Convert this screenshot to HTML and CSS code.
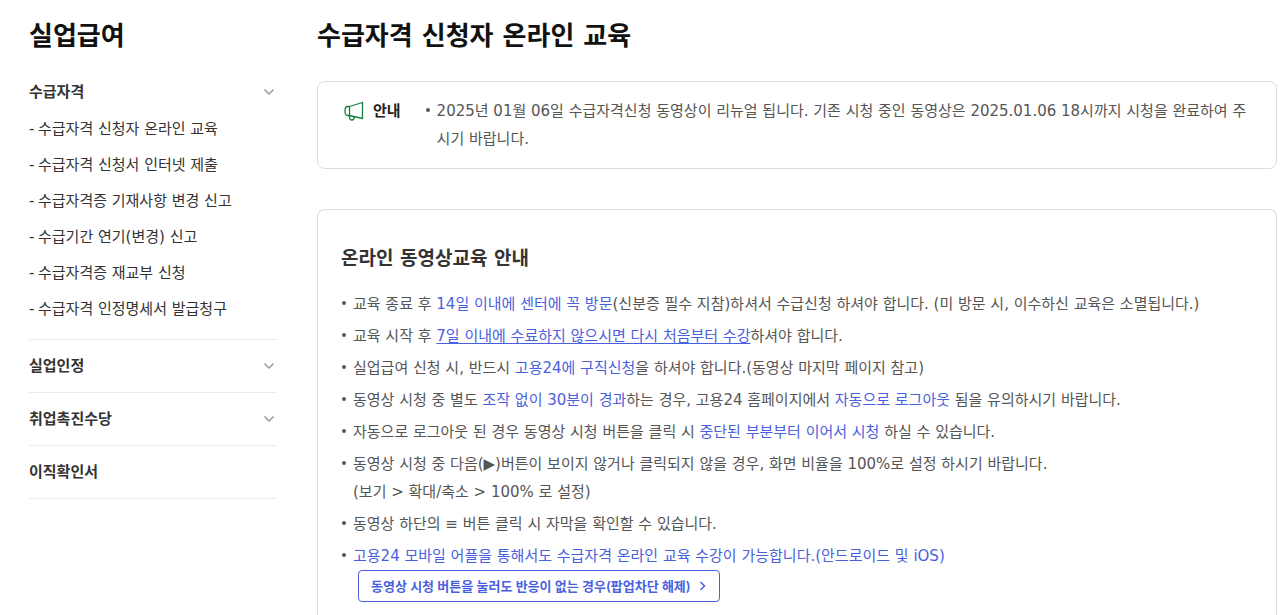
FILE: index.html
```html
<!DOCTYPE html>
<html lang="ko">
<head>
<meta charset="utf-8">
<meta name="viewport" content="width=device-width, initial-scale=1">
<title>수급자격 신청자 온라인 교육</title>
<link rel="stylesheet" href="styles.css">
</head>
<body>
<div class="layout">
  <nav class="side" aria-label="실업급여">
    <h2 class="page-title">실업급여</h2>
    <div class="group">
      <button class="group-head" type="button" aria-expanded="true">수급자격
        <svg class="chevron" viewBox="0 0 12 8" aria-hidden="true"><path d="M1.500 1.500 6 6l4.500-4.500"/></svg>
      </button>
      <ul class="sub">
        <li><a href="#">수급자격 신청자 온라인 교육</a></li>
        <li><a href="#">수급자격 신청서 인터넷 제출</a></li>
        <li><a href="#">수급자격증 기재사항 변경 신고</a></li>
        <li><a href="#">수급기간 연기(변경) 신고</a></li>
        <li><a href="#">수급자격증 재교부 신청</a></li>
        <li><a href="#">수급자격 인정명세서 발급청구</a></li>
      </ul>
    </div>
    <div class="group">
      <button class="group-head" type="button" aria-expanded="false">실업인정
        <svg class="chevron" viewBox="0 0 12 8" aria-hidden="true"><path d="M1.500 1.500 6 6l4.500-4.500"/></svg>
      </button>
    </div>
    <div class="group">
      <button class="group-head" type="button" aria-expanded="false">취업촉진수당
        <svg class="chevron" viewBox="0 0 12 8" aria-hidden="true"><path d="M1.500 1.500 6 6l4.500-4.500"/></svg>
      </button>
    </div>
    <div class="group">
      <a class="group-head" href="#">이직확인서</a>
    </div>
  </nav>

  <main class="main">
    <h1 class="page-title">수급자격 신청자 온라인 교육</h1>
    <section class="notice">
      <strong class="notice-label">
        <svg class="horn" viewBox="0 0 20 20" aria-hidden="true"><path d="M5.500 5.500 18.500 1.500V17.500L5.500 14.500ZM5.500 5.500H3.500C1.500 5.500 1 7 1 10s.5 4.500 2.500 4.500h2M5.500 14.500v2.200a2.300 2.300 0 0 0 4.600 0v-1.100"/></svg>
        안내
      </strong>
      <ul class="bullets">
        <li>2025년 01월 06일 수급자격신청 동영상이 리뉴얼 됩니다. 기존 시청 중인 동영상은 2025.01.06 18시까지 시청을 완료하여 주시기 바랍니다.</li>
      </ul>
    </section>
    <section class="card">
      <h2 class="card-title">온라인 동영상교육 안내</h2>
      <ul class="bullets">
        <li>교육 종료 후 <span class="point">14일 이내에 센터에 꼭 방문</span>(신분증 필수 지참)하셔서 수급신청 하셔야 합니다. (미 방문 시, 이수하신 교육은 소멸됩니다.)</li>
        <li>교육 시작 후 <span class="point underline">7일 이내에 수료하지 않으시면 다시 처음부터 수강</span>하셔야 합니다.</li>
        <li>실업급여 신청 시, 반드시 <span class="point">고용24에 구직신청</span>을 하셔야 합니다.(동영상 마지막 페이지 참고)</li>
        <li>동영상 시청 중 별도 <span class="point">조작 없이 30분이 경과</span>하는 경우, 고용24 홈페이지에서 <span class="point">자동으로 로그아웃</span> 됨을 유의하시기 바랍니다.</li>
        <li>자동으로 로그아웃 된 경우 동영상 시청 버튼을 클릭 시 <span class="point">중단된 부분부터 이어서 시청</span> 하실 수 있습니다.</li>
        <li>동영상 시청 중 다음(▶)버튼이 보이지 않거나 클릭되지 않을 경우, 화면 비율을 100%로 설정 하시기 바랍니다.<br>(보기 &gt; 확대/축소 &gt; 100% 로 설정)</li>
        <li>동영상 하단의 ≡ 버튼 클릭 시 자막을 확인할 수 있습니다.</li>
        <li><span class="point">고용24 모바일 어플을 통해서도 수급자격 온라인 교육 수강이 가능합니다.(안드로이드 및 iOS)</span></li>
      </ul>
      <button class="popup-help" type="button">동영상 시청 버튼을 눌러도 반응이 없는 경우(팝업차단 해제)
        <svg class="arrow" viewBox="0 0 8 12" aria-hidden="true"><path d="m1.500 2 4 4-4 4"/></svg>
      </button>
    </section>
  </main>
</div>
</body>
</html>
```
FILE: styles.css
```css
* { box-sizing: border-box; }

body {
  margin: 0;
  background: #fff;
  color: #555;
  font-family: "DejaVu Sans", "Noto Sans CJK KR", sans-serif;
  font-size: 15px;
  line-height: 28px;
}

ul { margin: 0; padding: 0; list-style: none; }
a { color: inherit; text-decoration: none; }
button { font-family: inherit; cursor: pointer; }
svg { flex: none; fill: none; stroke: currentColor; }

.layout {
  display: grid;
  grid-template-columns: 248px minmax(0, 1fr);
  gap: 40px;
  padding: 0 8px 0 29px;
}

.page-title {
  margin: 0;
  padding: 16px 0 10px;
  color: #111;
  font-size: 26px;
  font-weight: 700;
  line-height: 40px;
}

.group { padding: 8px 0; border-bottom: 1px solid #ebebeb; }

.group-head {
  display: flex;
  align-items: center;
  justify-content: space-between;
  width: 100%;
  height: 36px;
  padding: 0 2px 0 0;
  border: 0;
  background: none;
  color: #333;
  font-size: 15px;
  font-weight: 700;
  line-height: 28px;
}

.chevron { width: 12px; height: 8px; color: #999; stroke-width: 1.5; }

.sub { padding: 1px 0 4px; color: #333; }
.sub li { display: flex; line-height: 36px; }
.sub li::before { content: "-"; width: 9px; }

.notice,
.card {
  border: 1px solid #ddd;
  border-radius: 8px;
}

.notice {
  display: flex;
  gap: 24px;
  margin-top: 15px;
  padding: 15px 24px 15px 26px;
}

.notice-label {
  display: flex;
  flex: none;
  align-items: center;
  gap: 9px;
  height: 28px;
  color: #222;
  font-weight: 700;
}

.horn { width: 20px; height: 20px; color: #14803c; stroke-width: 1.3; stroke-linejoin: round; }

.bullets { display: grid; gap: 4px; }
.bullets li { position: relative; padding-left: 12px; }
.bullets li::before {
  content: "";
  position: absolute;
  top: 11px;
  left: 1px;
  width: 4px;
  height: 4px;
  border-radius: 50%;
  background: #555;
}

.card { margin-top: 40px; padding: 32px 24px 32px 23px; border-bottom: 0; border-radius: 8px 8px 0 0; }

.card-title {
  margin: 0 0 16px;
  color: #333;
  font-size: 19px;
  font-weight: 700;
  line-height: 32px;
}

.point { color: #4a5fe0; }
.underline { text-decoration: underline; text-underline-offset: 2px; }

.popup-help {
  display: flex;
  align-items: center;
  gap: 8px;
  height: 32px;
  margin: 0 0 0 17px;
  padding: 0 12px;
  border: 1px solid #4a5fe0;
  border-radius: 4px;
  background: #fff;
  color: #4a5fe0;
  font-family: Inter, "Noto Sans CJK KR", sans-serif;
  font-size: 13px;
  font-weight: 600;
  line-height: 28px;
}

.arrow { width: 8px; height: 12px; stroke-width: 1.5; }
```
